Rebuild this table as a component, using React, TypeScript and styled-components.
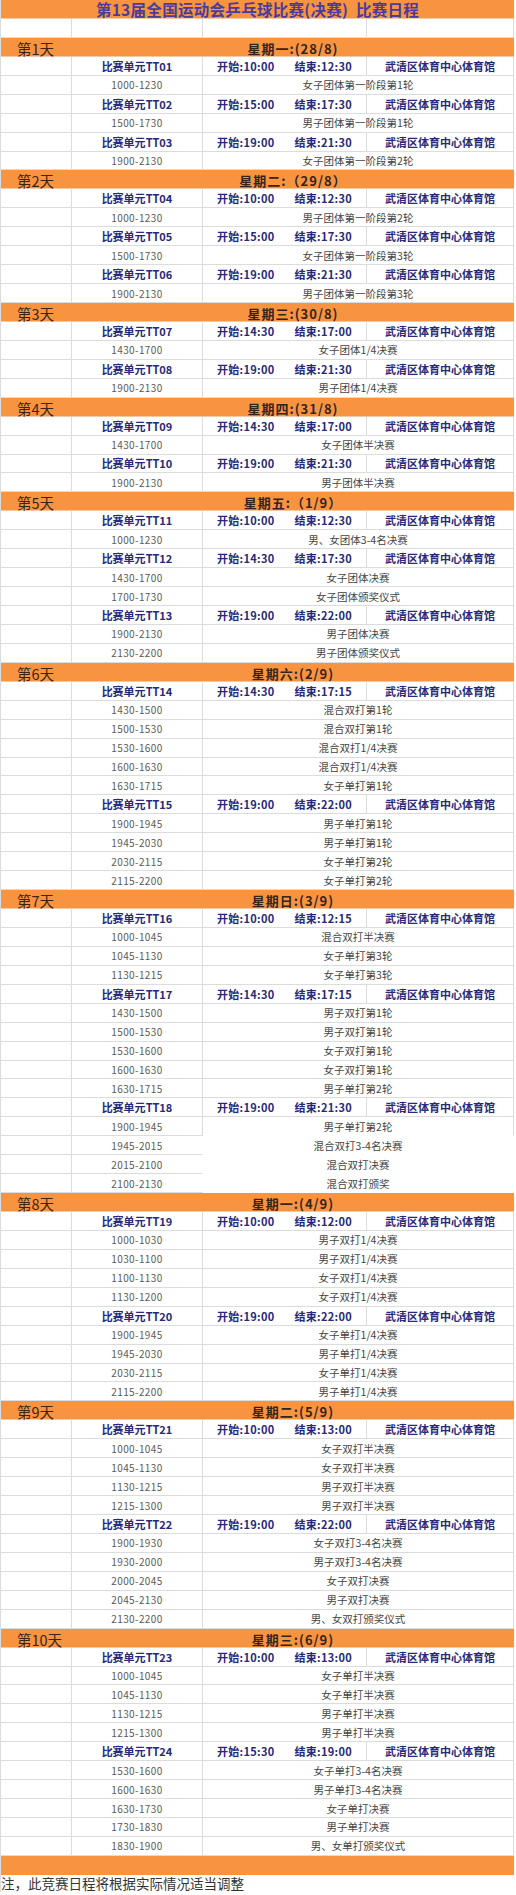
import React from 'react'
import styled, { createGlobalStyle } from 'styled-components'

type Slot = { time: string; event: string; open?: 'edge' | 'bare' }
type Unit = { id: string; start: string; end: string; slots: Slot[] }
type Day = { day: string; date: string; units: Unit[] }

const s = (time: string, event: string, open?: 'edge' | 'bare'): Slot => ({ time, event, open })

const days: Day[] = [
  {
    day: '第1天', date: '星期一:(28/8)', units: [
      { id: 'TT01', start: '10:00', end: '12:30', slots: [s('1000-1230', '女子团体第一阶段第1轮')] },
      { id: 'TT02', start: '15:00', end: '17:30', slots: [s('1500-1730', '男子团体第一阶段第1轮')] },
      { id: 'TT03', start: '19:00', end: '21:30', slots: [s('1900-2130', '女子团体第一阶段第2轮')] },
    ],
  },
  {
    day: '第2天', date: '星期二:（29/8）', units: [
      { id: 'TT04', start: '10:00', end: '12:30', slots: [s('1000-1230', '男子团体第一阶段第2轮')] },
      { id: 'TT05', start: '15:00', end: '17:30', slots: [s('1500-1730', '女子团体第一阶段第3轮')] },
      { id: 'TT06', start: '19:00', end: '21:30', slots: [s('1900-2130', '男子团体第一阶段第3轮')] },
    ],
  },
  {
    day: '第3天', date: '星期三:(30/8)', units: [
      { id: 'TT07', start: '14:30', end: '17:00', slots: [s('1430-1700', '女子团体1/4决赛')] },
      { id: 'TT08', start: '19:00', end: '21:30', slots: [s('1900-2130', '男子团体1/4决赛')] },
    ],
  },
  {
    day: '第4天', date: '星期四:(31/8)', units: [
      { id: 'TT09', start: '14:30', end: '17:00', slots: [s('1430-1700', '女子团体半决赛')] },
      { id: 'TT10', start: '19:00', end: '21:30', slots: [s('1900-2130', '男子团体半决赛')] },
    ],
  },
  {
    day: '第5天', date: '星期五:（1/9）', units: [
      { id: 'TT11', start: '10:00', end: '12:30', slots: [s('1000-1230', '男、女团体3-4名决赛')] },
      { id: 'TT12', start: '14:30', end: '17:30', slots: [s('1430-1700', '女子团体决赛'), s('1700-1730', '女子团体颁奖仪式')] },
      { id: 'TT13', start: '19:00', end: '22:00', slots: [s('1900-2130', '男子团体决赛'), s('2130-2200', '男子团体颁奖仪式')] },
    ],
  },
  {
    day: '第6天', date: '星期六:(2/9)', units: [
      {
        id: 'TT14', start: '14:30', end: '17:15', slots: [
          s('1430-1500', '混合双打第1轮'), s('1500-1530', '混合双打第1轮'), s('1530-1600', '混合双打1/4决赛'),
          s('1600-1630', '混合双打1/4决赛'), s('1630-1715', '女子单打第1轮'),
        ],
      },
      {
        id: 'TT15', start: '19:00', end: '22:00', slots: [
          s('1900-1945', '男子单打第1轮'), s('1945-2030', '男子单打第1轮'), s('2030-2115', '女子单打第2轮'),
          s('2115-2200', '女子单打第2轮'),
        ],
      },
    ],
  },
  {
    day: '第7天', date: '星期日:(3/9)', units: [
      {
        id: 'TT16', start: '10:00', end: '12:15', slots: [
          s('1000-1045', '混合双打半决赛'), s('1045-1130', '女子单打第3轮'), s('1130-1215', '女子单打第3轮'),
        ],
      },
      {
        id: 'TT17', start: '14:30', end: '17:15', slots: [
          s('1430-1500', '男子双打第1轮'), s('1500-1530', '男子双打第1轮'), s('1530-1600', '女子双打第1轮'),
          s('1600-1630', '女子双打第1轮'), s('1630-1715', '男子单打第2轮'),
        ],
      },
      {
        id: 'TT18', start: '19:00', end: '21:30', slots: [
          s('1900-1945', '男子单打第2轮', 'edge'), s('1945-2015', '混合双打3-4名决赛', 'bare'),
          s('2015-2100', '混合双打决赛', 'bare'), s('2100-2130', '混合双打颁奖', 'bare'),
        ],
      },
    ],
  },
  {
    day: '第8天', date: '星期一:(4/9)', units: [
      {
        id: 'TT19', start: '10:00', end: '12:00', slots: [
          s('1000-1030', '男子双打1/4决赛'), s('1030-1100', '男子双打1/4决赛'), s('1100-1130', '女子双打1/4决赛'),
          s('1130-1200', '女子双打1/4决赛'),
        ],
      },
      {
        id: 'TT20', start: '19:00', end: '22:00', slots: [
          s('1900-1945', '女子单打1/4决赛'), s('1945-2030', '男子单打1/4决赛'), s('2030-2115', '女子单打1/4决赛'),
          s('2115-2200', '男子单打1/4决赛'),
        ],
      },
    ],
  },
  {
    day: '第9天', date: '星期二:(5/9)', units: [
      {
        id: 'TT21', start: '10:00', end: '13:00', slots: [
          s('1000-1045', '女子双打半决赛'), s('1045-1130', '女子双打半决赛'), s('1130-1215', '男子双打半决赛'),
          s('1215-1300', '男子双打半决赛'),
        ],
      },
      {
        id: 'TT22', start: '19:00', end: '22:00', slots: [
          s('1900-1930', '女子双打3-4名决赛'), s('1930-2000', '男子双打3-4名决赛'), s('2000-2045', '女子双打决赛'),
          s('2045-2130', '男子双打决赛'), s('2130-2200', '男、女双打颁奖仪式'),
        ],
      },
    ],
  },
  {
    day: '第10天', date: '星期三:(6/9)', units: [
      {
        id: 'TT23', start: '10:00', end: '13:00', slots: [
          s('1000-1045', '女子单打半决赛'), s('1045-1130', '女子单打半决赛'), s('1130-1215', '男子单打半决赛'),
          s('1215-1300', '男子单打半决赛'),
        ],
      },
      {
        id: 'TT24', start: '15:30', end: '19:00', slots: [
          s('1530-1600', '女子单打3-4名决赛'), s('1600-1630', '男子单打3-4名决赛'), s('1630-1730', '女子单打决赛'),
          s('1730-1830', '男子单打决赛'), s('1830-1900', '男、女单打颁奖仪式'),
        ],
      },
    ],
  },
]

const GlobalStyle = createGlobalStyle`
  html, body {
    margin: 0;
    padding: 0;
    background: #ffffff;
  }
  body {
    font-family: "Noto Sans CJK SC", "Noto Sans", sans-serif;
  }
`

const ORANGE = '#f8943f'
const LINE = '#dcdcdc'
const NAVY = '#27297a'

const Sheet = styled.div`
  width: 514px;
  display: flex;
  flex-direction: column;
  border-left: 1px solid ${LINE};
  box-sizing: border-box;
`

const Row = styled.div`
  height: 18.95px;
  display: grid;
  grid-template-columns: 71px 131px 164px 147px;
  box-sizing: border-box;
`

const OrangeRow = styled.div`
  height: 18.95px;
  background: ${ORANGE};
  box-sizing: border-box;
  border-bottom: 1px solid #f2c9a4;
`

const TitleRow = styled(OrangeRow)`
  display: flex;
  align-items: center;
  justify-content: center;
  font-size: 15.5px;
  font-weight: 700;
  color: #4a3b9c;
  letter-spacing: 0.3px;
`

const DayRow = styled(OrangeRow)`
  display: grid;
  grid-template-columns: 71px 1fr;
  align-items: center;
`

const DayName = styled.div`
  padding-left: 16px;
  font-size: 14.5px;
  color: #3a2418;
`

const DayDate = styled.div`
  text-align: center;
  font-size: 13px;
  font-weight: 700;
  color: #35241e;
  letter-spacing: 1px;
`

const Cell = styled.div<{ $span?: number; $bare?: boolean; $edge?: boolean; $openRight?: boolean }>`
  grid-column: span ${p => p.$span || 1};
  display: flex;
  align-items: center;
  justify-content: center;
  box-sizing: border-box;
  border-right: 1px solid ${p => (p.$bare || p.$openRight ? 'transparent' : LINE)};
  border-bottom: 1px solid ${p => (p.$bare || p.$edge ? 'transparent' : LINE)};
  overflow: hidden;
  white-space: nowrap;
`

const UnitLabel = styled(Cell)`
  font-size: 11px;
  font-weight: 700;
  color: ${NAVY};
`

const Times = styled(Cell)`
  gap: 20px;
  font-size: 11px;
  font-weight: 700;
  color: ${NAVY};
  letter-spacing: 0.3px;
`

const TimeCell = styled(Cell)`
  font-size: 10px;
  color: #5a5a5a;
  letter-spacing: 0.4px;
`

const EventCell = styled(Cell)`
  font-size: 10.5px;
  color: #444444;
`

const FooterBar = styled.div`
  height: 18.95px;
  background: ${ORANGE};
`

const Note = styled.div`
  height: 17px;
  display: flex;
  align-items: center;
  padding-left: 1px;
  font-size: 13.5px;
  color: #333333;
  margin-left: -1px;
`

function UnitBlock({ unit }: { unit: Unit }) {
  return (
    <>
      <Row>
        <Cell />
        <UnitLabel>比赛单元{unit.id}</UnitLabel>
        <Times>
          <span>开始:{unit.start}</span>
          <span>结束:{unit.end}</span>
        </Times>
        <UnitLabel>武清区体育中心体育馆</UnitLabel>
      </Row>
      {unit.slots.map(slot => (
        <Row key={slot.time}>
          <Cell />
          <TimeCell $openRight={slot.open === 'bare'}>{slot.time}</TimeCell>
          <EventCell $span={2} $bare={slot.open === 'bare'} $edge={slot.open === 'edge'}>
            {slot.event}
          </EventCell>
        </Row>
      ))}
    </>
  )
}

export default function App() {
  return (
    <>
      <GlobalStyle />
      <Sheet>
        <TitleRow>第13届全国运动会乒乓球比赛(决赛)&nbsp;&nbsp;比赛日程</TitleRow>
        <Row>
          <Cell />
          <Cell />
          <Cell />
          <Cell />
        </Row>
        {days.map(d => (
          <React.Fragment key={d.day}>
            <DayRow>
              <DayName>{d.day}</DayName>
              <DayDate>{d.date}</DayDate>
            </DayRow>
            {d.units.map(u => (
              <UnitBlock key={u.id} unit={u} />
            ))}
          </React.Fragment>
        ))}
        <FooterBar />
        <Note>注，此竞赛日程将根据实际情况适当调整</Note>
      </Sheet>
    </>
  )
}
